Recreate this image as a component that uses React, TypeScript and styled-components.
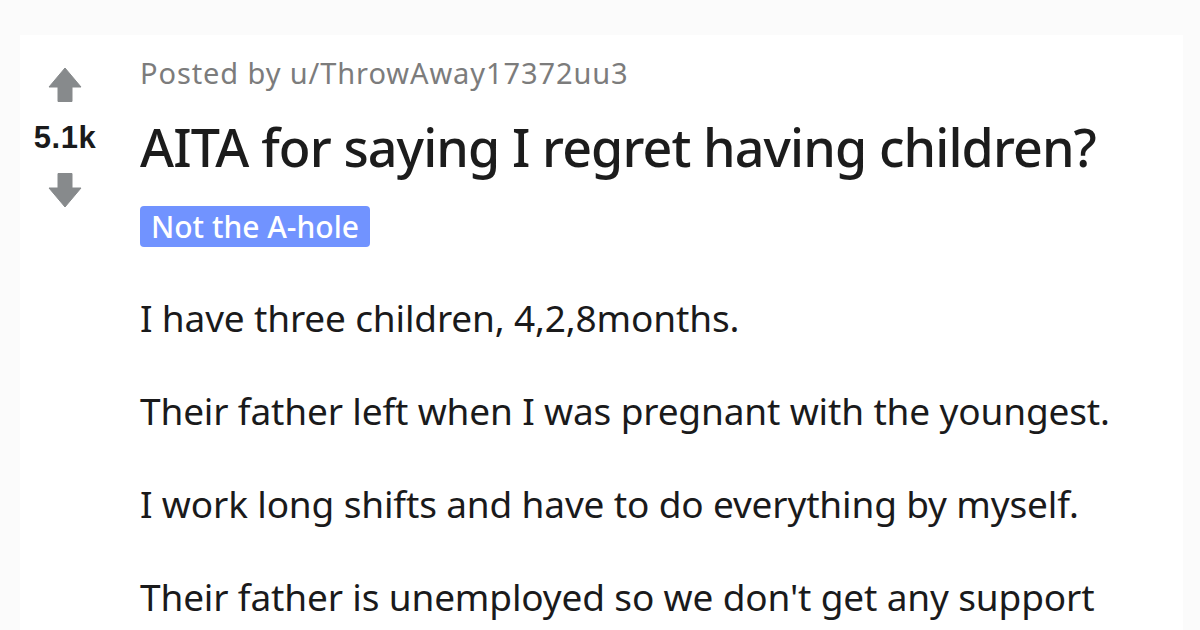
import React from "react";
import styled, { createGlobalStyle } from "styled-components";

const Global = createGlobalStyle`
  html, body { margin: 0; padding: 0; background: #fbfbfb; }
  body { width: 1200px; height: 630px; overflow: hidden; }
`;

const Page = styled.div`
  padding: 35px 17px 0 20px;
  height: 630px;
  box-sizing: border-box;
`;

const Card = styled.article`
  background: #ffffff;
  display: flex;
  height: 100%;
`;

const VoteColumn = styled.div`
  width: 90px;
  flex: none;
  display: flex;
  flex-direction: column;
  align-items: center;
  padding-top: 32px;
`;

const Arrow = styled.svg<{ $gapTop?: number }>`
  display: block;
  width: 34px;
  height: 35px;
  margin-top: ${(p) => p.$gapTop ?? 0}px;
`;

const Score = styled.div`
  margin-top: 21px;
  font-family: "Liberation Sans", Arial, sans-serif;
  font-weight: 700;
  font-size: 31px;
  line-height: 30px;
  letter-spacing: 0.5px;
  color: #1a1a1b;
`;

const Content = styled.div`
  margin-left: 30px;
  padding-top: 20px;
  display: flex;
  flex-direction: column;
  align-items: flex-start;
  font-family: "Noto Sans", sans-serif;
`;

const Meta = styled.div`
  font-size: 29px;
  line-height: 36px;
  letter-spacing: 0.9px;
  color: #7c7c7c;
`;

const Title = styled.h1`
  margin: 24px 0 0;
  font-size: 52px;
  line-height: 64px;
  font-weight: 500;
  letter-spacing: -0.9px;
  color: #1c1c1c;
`;

const Flair = styled.span`
  margin-top: 27px;
  height: 41px;
  padding: 0 11px;
  border-radius: 4px;
  background: #7193ff;
  color: #ffffff;
  font-size: 30px;
  line-height: 41px;
  font-weight: 500;
`;

const Body = styled.div`
  margin-top: 46px;
  display: flex;
  flex-direction: column;
  gap: 43px;
`;

const Para = styled.p`
  margin: 0;
  font-size: 37px;
  line-height: 50px;
  letter-spacing: -0.15px;
  color: #1a1a1b;
  white-space: nowrap;
`;

const UpArrow = () => (
  <Arrow viewBox="0 0 34 35">
    <path
      d="M17 1 L33 20 L24 20 L24 34.5 L10 34.5 L10 20 L1 20 Z"
      fill="#878a8c"
      stroke="#878a8c"
      strokeWidth="1"
      strokeLinejoin="round"
    />
  </Arrow>
);

const DownArrow = () => (
  <Arrow viewBox="0 0 34 35" $gapTop={20}>
    <path
      d="M17 34 L33 15 L24 15 L24 0.5 L10 0.5 L10 15 L1 15 Z"
      fill="#878a8c"
      stroke="#878a8c"
      strokeWidth="1"
      strokeLinejoin="round"
    />
  </Arrow>
);

const paragraphs = [
  "I have three children, 4,2,8months.",
  "Their father left when I was pregnant with the youngest.",
  "I work long shifts and have to do everything by myself.",
  "Their father is unemployed so we don't get any support",
];

export default function App() {
  return (
    <>
      <Global />
      <Page>
        <Card>
          <VoteColumn>
            <UpArrow />
            <Score>5.1k</Score>
            <DownArrow />
          </VoteColumn>
          <Content>
            <Meta>Posted by u/ThrowAway17372uu3</Meta>
            <Title>AITA for saying I regret having children?</Title>
            <Flair>Not the A-hole</Flair>
            <Body>
              {paragraphs.map((t) => (
                <Para key={t}>{t}</Para>
              ))}
            </Body>
          </Content>
        </Card>
      </Page>
    </>
  );
}
